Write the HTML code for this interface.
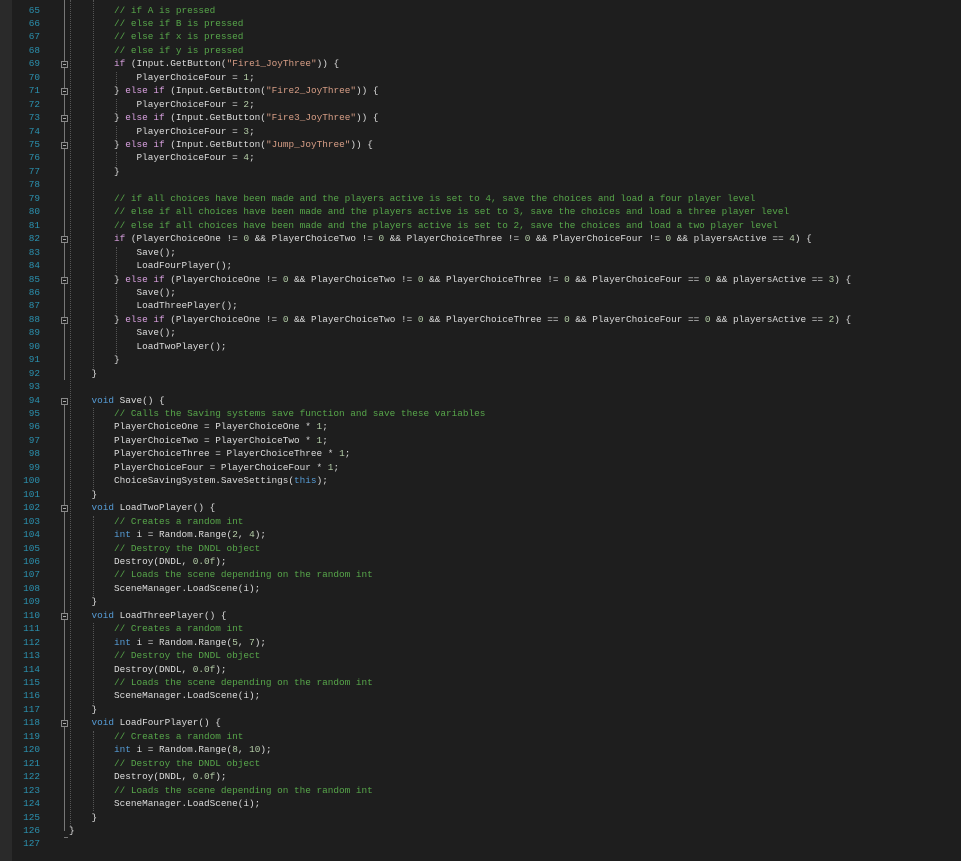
<!DOCTYPE html>
<html><head><meta charset="utf-8"><style>
html,body{margin:0;padding:0;background:#1e1e1e;width:961px;height:861px;overflow:hidden}
.gut{position:absolute;left:0;top:0;width:12px;height:861px;background:#2a2a2a}
.ln{position:absolute;left:12px;width:28px;text-align:right;color:#2b91af;font:9.4px "Liberation Mono",monospace}
.code{position:absolute;left:46.5px;white-space:pre;color:#dcdcdc;font:9.4px "Liberation Mono",monospace}
.c{color:#57a64a}.k{color:#569cd6}.f{color:#d8a0df}.s{color:#d69d85}.n{color:#b5cea8}.m{color:#dcdcaa}
.box{position:absolute;left:61px;width:7px;height:7px;border:1px solid #888;box-sizing:border-box;background:#1e1e1e}
.box:after{content:"";position:absolute;left:1px;top:2px;width:3px;height:1px;background:#aaa}
.vl{position:absolute;left:64px;width:1px;background:#777}
.g{position:absolute;width:0;border-left:1px dotted #555}
</style></head><body>
<div class="gut"></div>
<div id="r"></div>
<script>
const L=[
[65,'            <span class="c">// if A is pressed</span>'],
[66,'            <span class="c">// else if B is pressed</span>'],
[67,'            <span class="c">// else if x is pressed</span>'],
[68,'            <span class="c">// else if y is pressed</span>'],
[69,'            <span class="f">if</span> (Input.GetButton(<span class="s">"Fire1_JoyThree"</span>)) {'],
[70,'                PlayerChoiceFour = <span class="n">1</span>;'],
[71,'            } <span class="f">else if</span> (Input.GetButton(<span class="s">"Fire2_JoyThree"</span>)) {'],
[72,'                PlayerChoiceFour = <span class="n">2</span>;'],
[73,'            } <span class="f">else if</span> (Input.GetButton(<span class="s">"Fire3_JoyThree"</span>)) {'],
[74,'                PlayerChoiceFour = <span class="n">3</span>;'],
[75,'            } <span class="f">else if</span> (Input.GetButton(<span class="s">"Jump_JoyThree"</span>)) {'],
[76,'                PlayerChoiceFour = <span class="n">4</span>;'],
[77,'            }'],
[78,''],
[79,'            <span class="c">// if all choices have been made and the players active is set to 4, save the choices and load a four player level</span>'],
[80,'            <span class="c">// else if all choices have been made and the players active is set to 3, save the choices and load a three player level</span>'],
[81,'            <span class="c">// else if all choices have been made and the players active is set to 2, save the choices and load a two player level</span>'],
[82,'            <span class="f">if</span> (PlayerChoiceOne != <span class="n">0</span> &amp;&amp; PlayerChoiceTwo != <span class="n">0</span> &amp;&amp; PlayerChoiceThree != <span class="n">0</span> &amp;&amp; PlayerChoiceFour != <span class="n">0</span> &amp;&amp; playersActive == <span class="n">4</span>) {'],
[83,'                Save();'],
[84,'                LoadFourPlayer();'],
[85,'            } <span class="f">else if</span> (PlayerChoiceOne != <span class="n">0</span> &amp;&amp; PlayerChoiceTwo != <span class="n">0</span> &amp;&amp; PlayerChoiceThree != <span class="n">0</span> &amp;&amp; PlayerChoiceFour == <span class="n">0</span> &amp;&amp; playersActive == <span class="n">3</span>) {'],
[86,'                Save();'],
[87,'                LoadThreePlayer();'],
[88,'            } <span class="f">else if</span> (PlayerChoiceOne != <span class="n">0</span> &amp;&amp; PlayerChoiceTwo != <span class="n">0</span> &amp;&amp; PlayerChoiceThree == <span class="n">0</span> &amp;&amp; PlayerChoiceFour == <span class="n">0</span> &amp;&amp; playersActive == <span class="n">2</span>) {'],
[89,'                Save();'],
[90,'                LoadTwoPlayer();'],
[91,'            }'],
[92,'        }'],
[93,''],
[94,'        <span class="k">void</span> Save() {'],
[95,'            <span class="c">// Calls the Saving systems save function and save these variables</span>'],
[96,'            PlayerChoiceOne = PlayerChoiceOne * <span class="n">1</span>;'],
[97,'            PlayerChoiceTwo = PlayerChoiceTwo * <span class="n">1</span>;'],
[98,'            PlayerChoiceThree = PlayerChoiceThree * <span class="n">1</span>;'],
[99,'            PlayerChoiceFour = PlayerChoiceFour * <span class="n">1</span>;'],
[100,'            ChoiceSavingSystem.SaveSettings(<span class="k">this</span>);'],
[101,'        }'],
[102,'        <span class="k">void</span> LoadTwoPlayer() {'],
[103,'            <span class="c">// Creates a random int</span>'],
[104,'            <span class="k">int</span> i = Random.Range(<span class="n">2</span>, <span class="n">4</span>);'],
[105,'            <span class="c">// Destroy the DNDL object</span>'],
[106,'            Destroy(DNDL, <span class="n">0.0f</span>);'],
[107,'            <span class="c">// Loads the scene depending on the random int</span>'],
[108,'            SceneManager.LoadScene(i);'],
[109,'        }'],
[110,'        <span class="k">void</span> LoadThreePlayer() {'],
[111,'            <span class="c">// Creates a random int</span>'],
[112,'            <span class="k">int</span> i = Random.Range(<span class="n">5</span>, <span class="n">7</span>);'],
[113,'            <span class="c">// Destroy the DNDL object</span>'],
[114,'            Destroy(DNDL, <span class="n">0.0f</span>);'],
[115,'            <span class="c">// Loads the scene depending on the random int</span>'],
[116,'            SceneManager.LoadScene(i);'],
[117,'        }'],
[118,'        <span class="k">void</span> LoadFourPlayer() {'],
[119,'            <span class="c">// Creates a random int</span>'],
[120,'            <span class="k">int</span> i = Random.Range(<span class="n">8</span>, <span class="n">10</span>);'],
[121,'            <span class="c">// Destroy the DNDL object</span>'],
[122,'            Destroy(DNDL, <span class="n">0.0f</span>);'],
[123,'            <span class="c">// Loads the scene depending on the random int</span>'],
[124,'            SceneManager.LoadScene(i);'],
[125,'        }'],
[126,'    }'],
[127,'']];
const LH=13.45, T0=4.5;
let h='';
const y=n=>T0+(n-65)*LH;
for(const [n,s] of L){h+=`<div class="ln" style="top:${y(n)}px">${n}</div><div class="code" style="top:${y(n)}px">${s}</div>`;}
// fold lines
h+=`<div class="vl" style="top:0;height:${y(92)+12}px"></div>`;
h+=`<div class="vl" style="top:${y(94)+6}px;height:${y(126)+6-y(94)-6}px"></div>`;
h+=`<div style="position:absolute;left:64px;top:${y(126)+12}px;width:4px;height:1px;background:#777"></div>`;
for(const n of [69,71,73,75,82,85,88,94,102,110,118]) h+=`<div class="box" style="top:${y(n)+3}px"></div>`;
// indent guides
h+=`<div class="g" style="left:70px;top:0;height:${y(126)+3}px"></div>`;
h+=`<div class="g" style="left:93px;top:0;height:${y(92)}px"></div>`;
for(const [a,b] of [[95,101],[103,109],[111,117],[119,125]]) h+=`<div class="g" style="left:93px;top:${y(a)}px;height:${y(b)-y(a)}px"></div>`;
for(const [a,b] of [[70,70],[72,72],[74,74],[76,76],[83,84],[86,87],[89,90]]) h+=`<div class="g" style="left:116px;top:${y(a)}px;height:${y(b)-y(a)+LH}px"></div>`;
document.getElementById('r').innerHTML=h;
</script>
</body></html>
